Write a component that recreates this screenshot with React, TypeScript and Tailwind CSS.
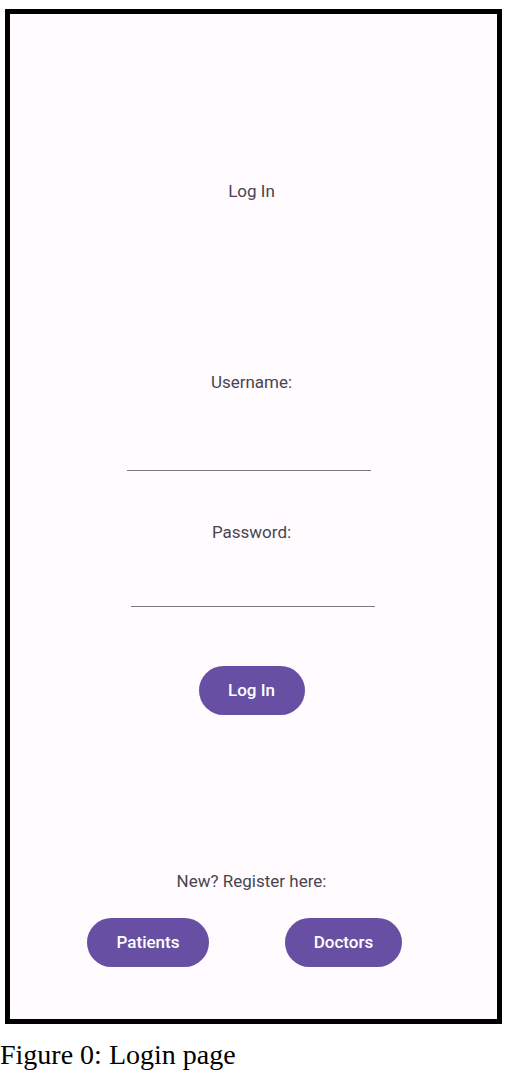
export default function App() {
  return (
    <div className="min-h-screen bg-white pt-[9px] pl-[5px]">
      {/* Phone frame */}
      <div className="w-[497px] h-[1015px] border-[5px] border-black bg-[#fffbfe] flex flex-col items-center font-['Roboto',sans-serif]">
        <h1 className="mt-[165px] mr-[4px] text-[17px] leading-6 text-[#49454f]">Log In</h1>

        <label className="mt-[167px] mr-[4px] text-[17px] leading-6 text-[#49454f]">Username:</label>
        <input
          type="text"
          className="mt-[37px] w-[244px] h-10 mr-[10px] bg-transparent border-b border-[#7a7a80] outline-none"
        />

        <label className="mt-[49px] mr-[4px] text-[17px] leading-6 text-[#49454f]">Password:</label>
        <input
          type="password"
          className="mt-[23px] w-[244px] h-10 mr-[2px] bg-transparent border-b border-[#7a7a80] outline-none"
        />

        <button className="mt-[59px] mr-[4px] w-[106px] h-[49px] rounded-full bg-[#6750a4] text-white text-[17px] font-medium">
          Log In
        </button>

        <p className="mt-[154px] mr-[4px] text-[17px] leading-6 text-[#49454f]">New? Register here:</p>

        <div className="mt-[25px] flex gap-[76px] mr-[18px]">
          <button className="w-[122px] h-[49px] rounded-full bg-[#6750a4] text-white text-[17px] font-medium">
            Patients
          </button>
          <button className="w-[117px] h-[49px] rounded-full bg-[#6750a4] text-white text-[17px] font-medium">
            Doctors
          </button>
        </div>
      </div>

      {/* Caption */}
      <p className="mt-[17px] -ml-[5px] font-['Liberation_Serif',serif] text-[28px] leading-7 text-black">
        Figure 0: Login page
      </p>
    </div>
  );
}
